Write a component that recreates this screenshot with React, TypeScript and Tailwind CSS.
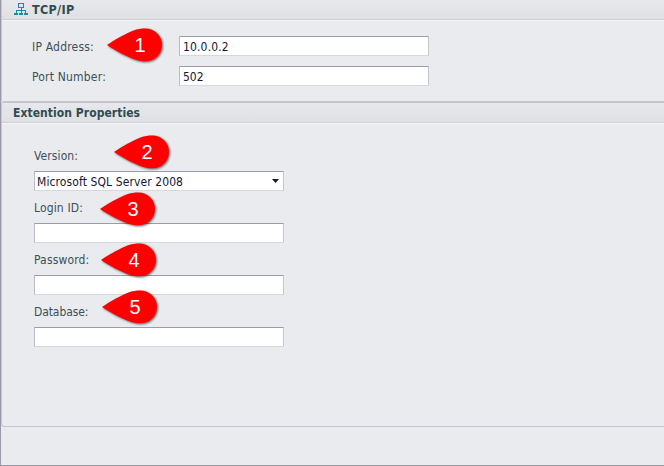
import type { ReactNode } from 'react';

function T({ children, w, className = '' }: { children: string; w: string; className?: string }) {
  return <span className={`block whitespace-nowrap leading-[16px] ${w} ${className}`}>{children}</span>;
}

function Marker({ n, place }: { n: number; place: string }) {
  return (
    <div className={`absolute z-10 ${place}`}>
      <svg width="66" height="42" viewBox="0 0 66 42" className="block [filter:drop-shadow(1px_1px_1px_rgba(0,0,0,0.6))]">
        <path d="M3 21 C11 15.5 22 9.5 29.5 6.5 C33.5 5 37.5 4.5 41.5 4.5 A16.4 16.4 0 0 1 41.5 37.3 C37.5 37.3 33.5 36.6 29.5 35 C22 32 11 26.5 3 21Z" fill="#fe0000" />
      </svg>
      <span className="absolute left-[26px] top-[9px] w-5 text-center font-['Liberation_Sans',sans-serif] text-[20px] leading-6 text-white">{n}</span>
    </div>
  );
}

function Field({ children, className = '' }: { children?: ReactNode; className?: string }) {
  return (
    <div className={`flex h-5 w-[250px] items-center justify-between border border-t-[#9c9ca8] border-l-[#bbbcc8] border-r-[#c5c6d0] border-b-[#d7d8de] bg-white text-[#17172f] ${className}`}>
      {children}
    </div>
  );
}

function Header({ children }: { children: ReactNode }) {
  return (
    <div className="flex h-5 items-center border-b border-[#cfd0d5] bg-linear-to-b from-[#e7e8eb] to-[#dfe0e3] font-bold text-[#2f4c52] shadow-[0_1px_0_#f5f5f8]">
      {children}
    </div>
  );
}

export default function App() {
  return (
    <main className="relative h-[466px] w-[664px] overflow-hidden border-b border-l border-b-[#9b9ba5] border-l-[#9a9aac] bg-[#eaebef] font-['DejaVu_Sans_Condensed','DejaVu_Sans',sans-serif] text-[12px] text-[#3b5057]">
      <section className="h-[101px] border-l border-[#c4c5ce]">
        <Header>
          <svg width="14" height="13" viewBox="0 0 14 13" className="ml-3 shrink-0" fill="none" stroke="#198aaa" shapeRendering="crispEdges">
            <rect x="4.5" y="0.5" width="5" height="4" />
            <path d="M4 4.5h6M7 5v2M2.5 10V7.5h9V10" />
            <path d="M7 5v5" />
            <path d="M0 11h4M5 11h4M10 11h4" strokeWidth="2" />
          </svg>
          <T w="w-[50px]" className="ml-1 text-[12.5px] tracking-[0.3px]">TCP/IP</T>
        </Header>
        <div className="flex flex-col gap-2.5 pl-[30px] pt-4">
          <div className="flex items-center">
            <T w="w-[147px]" className="pt-px tracking-[0.2px]">IP Address:</T>
            <Field><T w="w-[60px]" className="pl-[3px] pt-px tracking-[0.15px]">10.0.0.2</T></Field>
          </div>
          <div className="flex items-center">
            <T w="w-[147px]" className="pt-px tracking-[0.2px]">Port Number:</T>
            <Field><T w="w-[60px]" className="pl-[3px] pt-px">502</T></Field>
          </div>
        </div>
      </section>
      <section className="h-[326px] rounded-l-[3px] border-b border-l border-t-2 border-[#c4c5ce]">
        <Header><T w="w-[150px]" className="pl-[11px] pt-px tracking-[0.06px]">Extention Properties</T></Header>
        <div className="flex flex-col pl-8 pt-[25px]">
          <T w="w-[100px]" className="tracking-[0.1px]">Version:</T>
          <Field className="mt-[7px]">
            <T w="w-[180px]" className="pl-[2px] pt-px tracking-[0.1px]">Microsoft SQL Server 2008</T>
            <svg width="7" height="4" viewBox="0 0 7 4" className="mr-1"><path d="M0 0H7L3.5 4Z" fill="#17172f" /></svg>
          </Field>
          <T w="w-[100px]" className="mt-[9px] tracking-[0.15px]">Login ID:</T>
          <Field className="mt-[7px]" />
          <T w="w-[100px]" className="mt-[9px] tracking-[0.15px]">Password:</T>
          <Field className="mt-[7px]" />
          <T w="w-[100px]" className="mt-[9px] tracking-[-0.1px]">Database:</T>
          <Field className="mt-[7px]" />
        </div>
      </section>
      <Marker n={1} place="left-[103px] top-[24px]" />
      <Marker n={2} place="left-[110px] top-[131px]" />
      <Marker n={3} place="left-[96px] top-[188px]" />
      <Marker n={4} place="left-[97px] top-[239px]" />
      <Marker n={5} place="left-[98px] top-[286px]" />
    </main>
  );
}
